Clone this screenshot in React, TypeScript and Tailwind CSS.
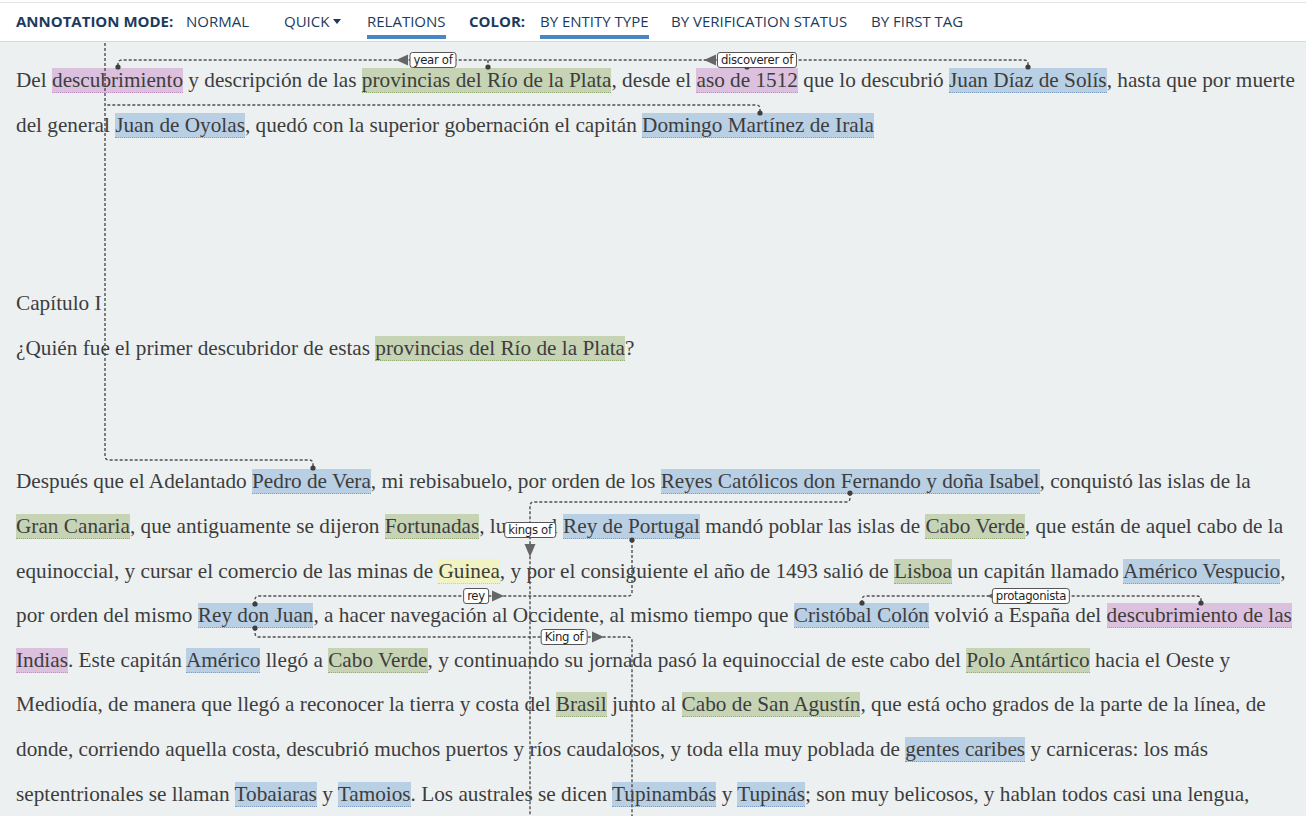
import React from 'react'

type Kind = 'event' | 'place' | 'person' | 'misc'

const kindClass: Record<Kind, string> = {
  event: 'bg-[#dcc1de] border-[#c58fc8]',
  place: 'bg-[#c6d4b5] border-[#96ad76]',
  person: 'bg-[#b9cfe4] border-[#7d9fc6]',
  misc: 'bg-[#f1f3c3] border-[#cdd27a]',
}

function E({ k, children }: { k: Kind; children: React.ReactNode }) {
  return (
    <span className={`border-b border-dotted ${kindClass[k]}`}>
      {children}
    </span>
  )
}

function Line({ children }: { children?: React.ReactNode }) {
  return <div className="h-[44.6px] whitespace-nowrap">{children}</div>
}

function Label({ x, y, text }: { x: number; y: number; text: string }) {
  return (
    <div
      className="absolute -translate-x-1/2 -translate-y-1/2 bg-white border border-[#555] rounded-[3px] px-[3px] h-[16px] leading-[14px] text-[13px] tracking-[-0.3px] text-[#1f1f1f] whitespace-nowrap"
      style={{ left: x, top: y, fontFamily: '"Liberation Sans Narrow", "DejaVu Sans Condensed", "Liberation Sans", sans-serif', fontStretch: 'condensed' }}
    >
      {text}
    </div>
  )
}

function Relations() {
  const line = { fill: 'none', stroke: '#4f4f4f', strokeWidth: 1.4, strokeDasharray: '3 2' }
  const dots: [number, number][] = [
    [118, 67], [488, 67], [747, 67], [1028, 67],
    [760, 113], [313, 468], [850, 493], [632, 540],
    [255, 604], [255, 628], [862, 603], [1201, 603],
  ]
  return (
    <svg className="absolute left-0 top-0 pointer-events-none" width={1306} height={816}>
      <path {...line} d="M118,66 L118,64 Q118,60 122,60 L1024,60 Q1028,60 1028,64 L1028,66" />
      <path {...line} d="M488,60 L488,66 M747,60 L747,66" />
      <path {...line} d="M760,112 L760,109 Q760,105 756,105 L105,105" />
      <path {...line} d="M105,43 L105,456 Q105,460 109,460 L309,460 Q313,460 313,464 L313,467" />
      <path {...line} d="M850,493 L850,498 Q850,502 846,502 L534,502 Q530,502 530,506 L530,816" />
      <path {...line} d="M632,540 L632,592 Q632,596 628,596 L259,596 Q255,596 255,600 L255,603" />
      <path {...line} d="M255,628 L255,633 Q255,637 259,637 L628,637 Q632,637 632,641 L632,816" />
      <path {...line} d="M862,603 L862,600 Q862,596 866,596 L1197,596 Q1201,596 1201,600 L1201,603" />
      {dots.map(([cx, cy], i) => (
        <circle key={i} cx={cx} cy={cy} r={2.6} fill="#3f3f3f" />
      ))}
      <g fill="#666">
        <polygon points="396,60 408,54.5 408,65.5" />
        <polygon points="704,60 716,54.5 716,65.5" />
        <polygon points="524.5,544 535.5,544 530,557" />
        <polygon points="504,596 492,590.5 492,601.5" />
        <polygon points="604,637 592,631.5 592,642.5" />
        <polygon points="987,596 999,590.5 999,601.5" />
      </g>
    </svg>
  )
}

const tabs = [
  { t: 'ANNOTATION MODE:', w: 'w-[186px] pl-4', bold: true },
  { t: 'NORMAL', w: 'w-[98px]' },
  { t: 'QUICK', w: 'w-[83px]', caret: true },
  { t: 'RELATIONS', w: 'w-[102px]', active: true },
  { t: 'COLOR:', w: 'w-[71px]', bold: true },
  { t: 'BY ENTITY TYPE', w: 'w-[131px]', active: true },
  { t: 'BY VERIFICATION STATUS', w: 'w-[200px]' },
  { t: 'BY FIRST TAG', w: 'w-[120px]' },
]

export default function App() {
  return (
    <div className="relative w-[1306px] h-[816px] overflow-hidden bg-[#ecf0f1]">
      <div className="bg-white">
        <div className="h-[2px]" />
        <div className="h-px bg-[#e3e5e7]" />
        <div
          className="flex items-end h-[39px] border-b border-[#d3d8db] text-[15px] text-[#1c3b5c]"
          style={{ fontFamily: '"Open Sans", "Noto Sans", sans-serif' }}
        >
          {tabs.map((tab) => (
            <div key={tab.t} className={`${tab.w} shrink-0 pb-[2px]`}>
              <span
                className={`inline-flex items-center h-[26px] pb-[7px] leading-[20px] border-b-4 ${
                  tab.active ? 'border-[#4a86c6]' : 'border-transparent'
                } ${tab.bold ? 'font-bold' : ''}`}
              >
                {tab.t}
                {tab.caret && (
                  <span className="ml-[4px] mt-[2px] w-0 h-0 border-l-[4px] border-r-[4px] border-t-[5px] border-l-transparent border-r-transparent border-t-[#1c3b5c]" />
                )}
              </span>
            </div>
          ))}
        </div>
      </div>

      <div
        className="pl-4 pt-[16px] text-[21.25px] leading-[44.6px] text-[#3d3d3d]"
        style={{ fontFamily: '"Liberation Serif", "Times New Roman", serif' }}
      >
        <Line>
          Del <E k="event">descubrimiento</E> y descripción de las <E k="place">provincias del Río de la Plata</E>, desde el{' '}
          <E k="event">aso de 1512</E> que lo descubrió <E k="person">Juan Díaz de Solís</E>, hasta que por muerte
        </Line>
        <Line>
          del general <E k="person">Juan de Oyolas</E>, quedó con la superior gobernación el capitán{' '}
          <E k="person">Domingo Martínez de Irala</E>
        </Line>
        <Line />
        <Line />
        <Line />
        <Line>Capítulo I</Line>
        <Line>
          ¿Quién fue el primer descubridor de estas <E k="place">provincias del Río de la Plata</E>?
        </Line>
        <Line />
        <Line />
        <Line>
          Después que el Adelantado <E k="person">Pedro de Vera</E>, mi rebisabuelo, por orden de los{' '}
          <E k="person">Reyes Católicos don Fernando y doña Isabel</E>, conquistó las islas de la
        </Line>
        <Line>
          <E k="place">Gran Canaria</E>, que antiguamente se dijeron <E k="place">Fortunadas</E>, luego el{' '}
          <E k="person">Rey de Portugal</E> mandó poblar las islas de <E k="place">Cabo Verde</E>, que están de aquel cabo de la
        </Line>
        <Line>
          equinoccial, y cursar el comercio de las minas de <E k="misc">Guinea</E>, y por el consiguiente el año de 1493 salió de{' '}
          <E k="place">Lisboa</E> un capitán llamado <E k="person">Américo Vespucio</E>,
        </Line>
        <Line>
          por orden del mismo <E k="person">Rey don Juan</E>, a hacer navegación al Occidente, al mismo tiempo que{' '}
          <E k="person">Cristóbal Colón</E> volvió a España del <E k="event">descubrimiento de las</E>
        </Line>
        <Line>
          <E k="event">Indias</E>. Este capitán <E k="person">Américo</E> llegó a <E k="place">Cabo Verde</E>, y continuando su jornada
          pasó la equinoccial de este cabo del <E k="place">Polo Antártico</E> hacia el Oeste y
        </Line>
        <Line>
          Mediodía, de manera que llegó a reconocer la tierra y costa del <E k="place">Brasil</E> junto al{' '}
          <E k="place">Cabo de San Agustín</E>, que está ocho grados de la parte de la línea, de
        </Line>
        <Line>
          donde, corriendo aquella costa, descubrió muchos puertos y ríos caudalosos, y toda ella muy poblada de{' '}
          <E k="person">gentes caribes</E> y carniceras: los más
        </Line>
        <Line>
          septentrionales se llaman <E k="person">Tobaiaras</E> y <E k="person">Tamoios</E>. Los australes se dicen{' '}
          <E k="person">Tupinambás</E> y <E k="person">Tupinás</E>; son muy belicosos, y hablan todos casi una lengua,
        </Line>
      </div>

      <Relations />
      <Label x={433} y={60} text="year of" />
      <Label x={757} y={60} text="discoverer of" />
      <Label x={530} y={530} text="kings of" />
      <Label x={476} y={596} text="rey" />
      <Label x={564} y={637} text="King of" />
      <Label x={1031} y={596} text="protagonista" />
    </div>
  )
}
